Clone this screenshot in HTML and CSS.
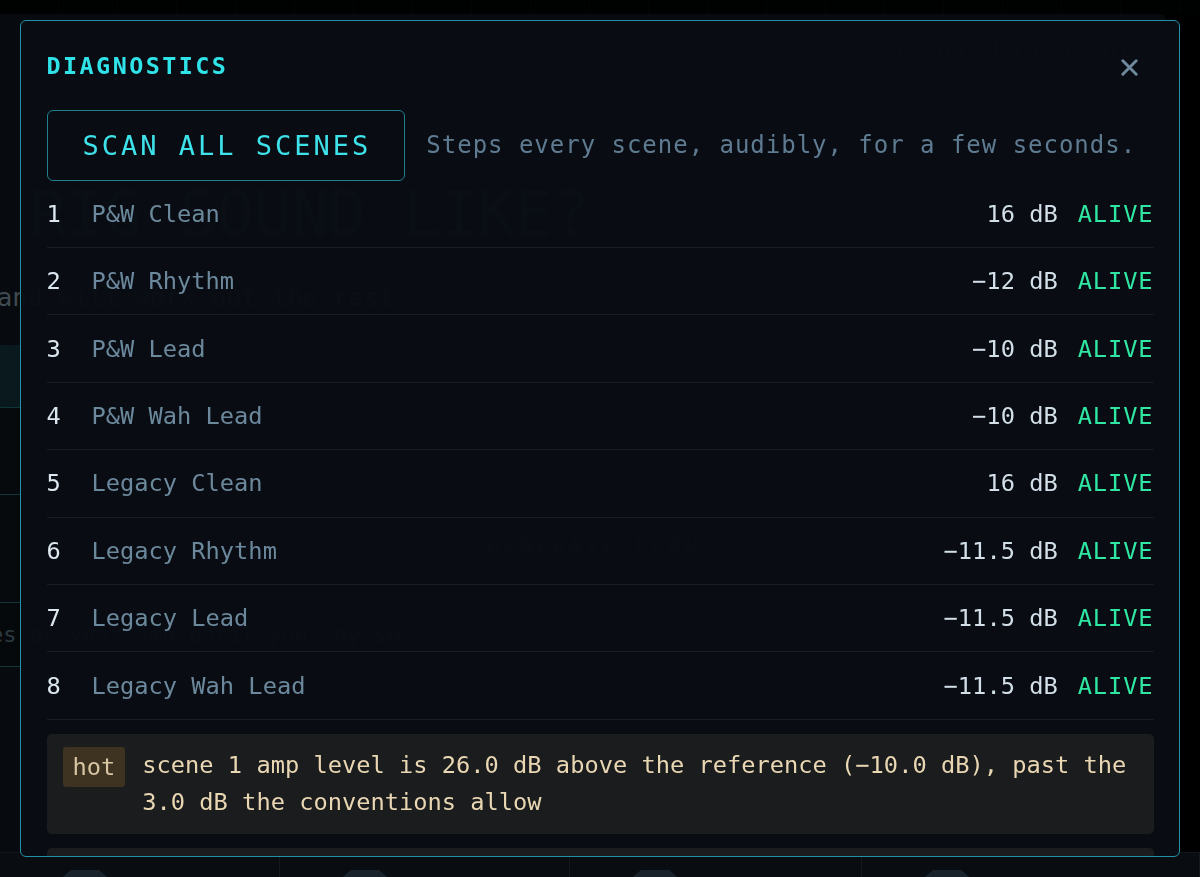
FILE: index.html
```html
<!DOCTYPE html>
<html lang="en">
<head>
<meta charset="utf-8">
<title>Diagnostics</title>
<link rel="stylesheet" href="styles.css">
</head>
<body>
<div class="page">
  <div class="topbar"></div>
  <div class="workspace">
    <div class="workspace-head">
      <span class="model-note">using ChatGPT 5o1</span>
    </div>
    <h1 class="hero-title">RIG SOUND LIKE?</h1>
    <p class="hero-sub">and will work out the rest.</p>
    <div class="form-grid">
      <div class="fields">
        <div class="field field-input"></div>
        <div class="field field-a"></div>
        <div class="field field-b"></div>
        <div class="field field-c"><span class="hint">es on your amp until you say so.</span></div>
      </div>
      <div class="actions">
        <div class="generate-wrap"><button class="generate">GENERATE PLAN</button></div>
      </div>
    </div>
  </div>
  <div class="footer">
    <div class="foot-cell"><span class="knob"></span></div>
    <div class="foot-cell"><span class="knob"></span></div>
    <div class="foot-cell"><span class="knob"></span></div>
    <div class="foot-cell"><span class="knob"></span></div>
  </div>
</div>

<div class="backdrop">
  <div class="modal">
    <div class="modal-head">
      <h2 class="modal-title">DIAGNOSTICS</h2>
      <button class="close" aria-label="Close">
        <svg width="17" height="17" viewBox="0 0 17 17"><path d="M1.8 1.8L15.2 15.2M15.2 1.8L1.8 15.2" stroke="#6f899d" stroke-width="2.9" stroke-linecap="round" fill="none"/></svg>
      </button>
    </div>
    <div class="scan-row">
      <button class="scan-btn">SCAN ALL SCENES</button>
      <span class="scan-desc">Steps every scene, audibly, for a few seconds.</span>
    </div>
    <ul class="scenes">
      <li class="scene"><span class="num">1</span><span class="name">P&amp;W Clean</span><span class="level">16 dB</span><span class="status">ALIVE</span></li>
      <li class="scene"><span class="num">2</span><span class="name">P&amp;W Rhythm</span><span class="level">−12 dB</span><span class="status">ALIVE</span></li>
      <li class="scene"><span class="num">3</span><span class="name">P&amp;W Lead</span><span class="level">−10 dB</span><span class="status">ALIVE</span></li>
      <li class="scene"><span class="num">4</span><span class="name">P&amp;W Wah Lead</span><span class="level">−10 dB</span><span class="status">ALIVE</span></li>
      <li class="scene"><span class="num">5</span><span class="name">Legacy Clean</span><span class="level">16 dB</span><span class="status">ALIVE</span></li>
      <li class="scene"><span class="num">6</span><span class="name">Legacy Rhythm</span><span class="level">−11.5 dB</span><span class="status">ALIVE</span></li>
      <li class="scene"><span class="num">7</span><span class="name">Legacy Lead</span><span class="level">−11.5 dB</span><span class="status">ALIVE</span></li>
      <li class="scene"><span class="num">8</span><span class="name">Legacy Wah Lead</span><span class="level">−11.5 dB</span><span class="status">ALIVE</span></li>
    </ul>
    <div class="warn">
      <span class="badge">hot</span>
      <p class="warn-text">scene 1 amp level is 26.0 dB above the reference (−10.0 dB), past the 3.0 dB the conventions allow</p>
    </div>
    <div class="warn">
      <span class="badge">hot</span>
      <p class="warn-text">scene 5 amp level is 26.0 dB above the reference (−10.0 dB), past the 3.0 dB the conventions allow</p>
    </div>
  </div>
</div>
</body>
</html>
```

FILE: styles.css
```css
html, body {
  margin: 0;
  padding: 0;
  height: 100%;
}
body {
  background: #000;
  font-family: "DejaVu Sans Mono", "Liberation Mono", monospace;
  overflow: hidden;
}

/* ---------- background page ---------- */
.page {
  height: 877px;
  display: flex;
  flex-direction: column;
}
.topbar {
  height: 14px;
  flex: none;
  background: repeating-linear-gradient(90deg, #010203 0 58px, #050709 58px 59px);
}
.workspace {
  flex: 1;
  display: flex;
  flex-direction: column;
  margin-right: 33px;
  background: #0c1218;
  border-top-right-radius: 8px;
  overflow: hidden;
}
.workspace-head {
  display: flex;
  justify-content: flex-end;
  padding: 22px 37px 0 0;
}
.model-note {
  font-size: 22.8px;
  line-height: 28px;
  color: #3a4b58;
}
.hero-title {
  margin: 119px 0 0 30px;
  font-size: 62px;
  line-height: 62px;
  font-weight: normal;
  color: #4a5a68;
  white-space: nowrap;
}
.hero-sub {
  margin: 37px 0 0 -3px;
  font-size: 25.4px;
  line-height: 30px;
  color: #6a7c88;
  white-space: nowrap;
}
.form-grid {
  margin-top: 33px;
  display: grid;
  grid-template-columns: 420px 1fr;
}
.fields {
  margin-left: -10px;
  display: flex;
  flex-direction: column;
}
.field {
  border-bottom: 1px solid #1c5a62;
}
.field-input {
  height: 62px;
  background: linear-gradient(120deg, #0f2c33, #0b1a20);
}
.field-a { height: 86px; background: #0a1217; }
.field-b { height: 107px; background: #0a1115; }
.field-c {
  height: 63px;
  background: #0a1014;
  display: flex;
  align-items: center;
}
.hint {
  font-size: 22px;
  color: #4b5f6c;
  white-space: nowrap;
}
.actions {
  padding: 155px 0 0 15px;
}
.generate-wrap {
  width: 317px;
  height: 82px;
  border: 1px solid #1a2733;
  border-radius: 8px;
  box-sizing: border-box;
  padding: 16px 14px 0;
}
.generate {
  width: 100%;
  height: 62px;
  background: #0e161d;
  border: 1px solid #2a3a48;
  border-radius: 6px;
  font-family: inherit;
  font-size: 24px;
  font-weight: bold;
  letter-spacing: 2px;
  color: #3d4d5a;
}
.footer {
  height: 24px;
  flex: none;
  display: grid;
  grid-template-columns: 280px 290px 292px 1fr;
  background: #0f171f;
  border-top: 1px solid #1a252f;
}
.foot-cell {
  border-right: 1px solid #1f2b36;
  position: relative;
}
.knob {
  position: absolute;
  left: 63px;
  bottom: 0;
  width: 44px;
  height: 7px;
  background: #2b3a47;
  clip-path: polygon(18% 0, 82% 0, 100% 100%, 0 100%);
}

/* ---------- modal ---------- */
.backdrop {
  position: fixed;
  inset: 0;
  background: rgba(0, 0, 0, 0.4);
}
.modal {
  position: absolute;
  left: 20px;
  top: 20px;
  right: 20px;
  bottom: 20px;
  box-sizing: border-box;
  border: 1.5px solid #2293a6;
  border-radius: 6px;
  background: rgba(9, 13, 19, 0.975);
  padding: 25.5px 25.5px;
  overflow: hidden;
}
.modal-head {
  height: 38px;
  display: flex;
  align-items: center;
  justify-content: space-between;
  margin-bottom: 25px;
}
.modal-title {
  margin: 0;
  font-size: 23.4px;
  font-weight: bold;
  letter-spacing: 2.45px;
  color: #2fe3e9;
}
.close {
  background: none;
  border: 0;
  padding: 0;
  margin: 3px 16px 0 0;
  width: 17px;
  height: 17px;
  display: flex;
}
.scan-row {
  display: flex;
  align-items: center;
  gap: 21px;
}
.scan-btn {
  height: 71px;
  padding: 0 33px 0 35px;
  background: transparent;
  border: 1.5px solid #1f808e;
  border-radius: 6px;
  font-family: inherit;
  font-size: 27px;
  letter-spacing: 3px;
  color: #3ee2ea;
}
.scan-desc {
  font-size: 24px;
  letter-spacing: 0.98px;
  color: #5e7b91;
  white-space: nowrap;
}
.scenes {
  list-style: none;
  margin: 0;
  padding: 0;
}
.scene {
  height: 67.43px;
  box-sizing: border-box;
  border-bottom: 1px solid #151d25;
  display: flex;
  align-items: center;
  font-size: 23.7px;
}
.num {
  width: 45px;
  color: #dde7ef;
}
.name {
  flex: 1;
  color: #6b889c;
}
.level {
  color: #d3dfe8;
}
.status {
  margin-left: 20px;
  letter-spacing: 0.9px;
  color: #2fe6a2;
}
.warn {
  margin-top: 14px;
  background: #1b1c1d;
  border-radius: 5px;
  padding: 13px 16px;
  display: flex;
  align-items: flex-start;
  gap: 17px;
}
.badge {
  flex: none;
  padding: 5px 10px;
  line-height: 30px;
  font-size: 23.7px;
  border-radius: 3px;
  background: #3e3221;
  color: #d9c6a3;
}
.warn-text {
  margin: 0;
  font-size: 23.7px;
  line-height: 37px;
  color: #e9d6b3;
}
```
